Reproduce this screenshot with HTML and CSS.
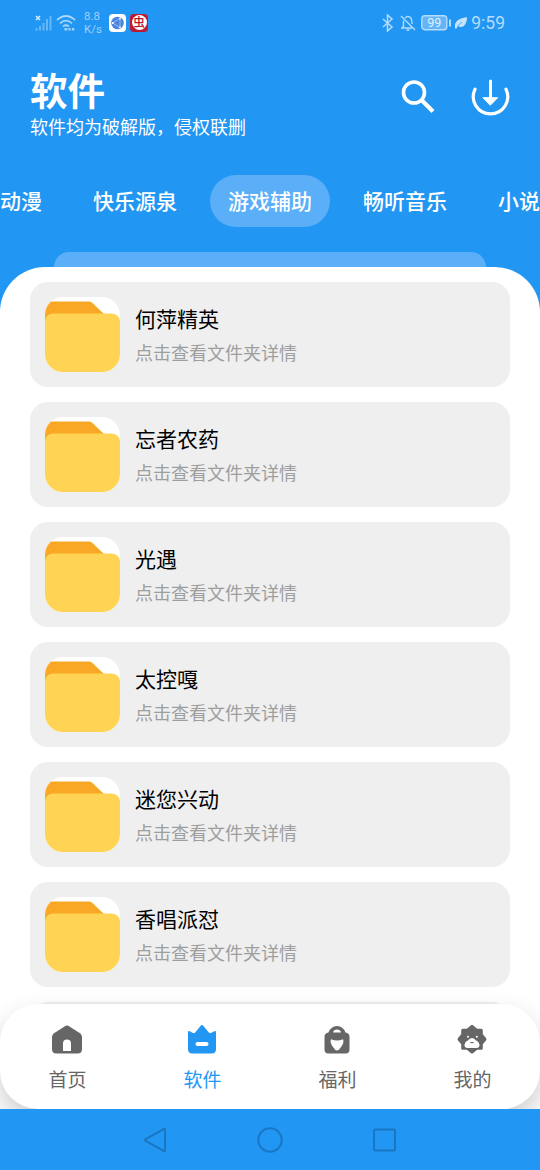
FILE: index.html
```html
<!DOCTYPE html>
<html lang="zh-CN">
<head>
<meta charset="utf-8">
<title>软件</title>
<link rel="stylesheet" href="styles.css">
</head>
<body>
<svg class="defs" width="0" height="0">
  <symbol id="folder" viewBox="0 0 75 75">
    <rect width="75" height="75" fill="#fff"/>
    <path d="M0 4.500H44.500Q46 4.500 47.500 6L60 18V32H0Z" fill="#f9a825"/>
    <path d="M0 75V24Q1 16.500 9 16.500H66Q74 16.500 75 24V75Z" fill="#ffd454"/>
  </symbol>
</svg>
<div class="screen">
  <header class="status">
    <div class="status-left">
      <svg class="signal" width="18" height="18" viewBox="0 0 18 18"><path d="M1 2l4 4M5 2L1 6" stroke="#d3eafd" stroke-width="1.600"/><path d="M1.500 14v2.500M5 12v4.500M8.500 9v7.500M12 5v11.500M15.500 2v14.500" stroke="#67b7f8" stroke-width="2"/></svg>
      <svg class="wifi" width="20" height="18" viewBox="0 0 20 18" fill="none" stroke="#a9d6fb" stroke-width="1.700"><path d="M1 6Q10-2 19 6M4 9.300Q10 4 16 9.300M7 12.500Q10 10 13 12.500"/><path d="M8.500 15.300h2.800M12.500 15.300h2M15.800 15.300h2.500" stroke-width="2.500"/></svg>
      <div class="speed">8.8<br>K/s</div>
      <svg class="app" width="17" height="18" viewBox="0 0 17 18"><rect width="17" height="18" rx="4" fill="#fff"/><circle cx="8.500" cy="9" r="6.300" fill="#4b83df"/><path d="M3.500 9L11 4.500V13.500Z" fill="none" stroke="#a9c7f5" stroke-width=".8"/><circle cx="3.800" cy="9" r="1" fill="#fff"/><circle cx="11" cy="4.500" r=".9" fill="#fff"/><circle cx="11" cy="13.500" r=".9" fill="#fff"/></svg>
      <div class="bug"><span>虫</span></div>
    </div>
    <div class="status-right">
      <svg width="12" height="18" viewBox="0 0 12 18" fill="none" stroke="#b5dcfc" stroke-width="1.500"><path d="M1 5l9 8-4.500 4V1L10 5 1 13"/></svg>
      <svg class="bell" width="16" height="18" viewBox="0 0 16 18" fill="none" stroke="#b5dcfc" stroke-width="1.400"><path d="M5 4Q8 1 11 4 12 6 12 10M3.500 6.500V12L2 14H12M6.500 16h3M1 2l14 14"/></svg>
      <svg class="battery" width="31" height="18" viewBox="0 0 31 18"><rect x=".8" y="1.700" width="25" height="14" rx="3" fill="#63b4f8" stroke="#b5dcfc" stroke-width="1.400"/><path d="M29 5.500v7" stroke="#b5dcfc" stroke-width="2"/><text x="13.300" y="13.200" text-anchor="middle">99</text></svg>
      <svg class="leaf" width="12" height="12" viewBox="0 0 12 12"><path d="M0 11Q-1 6 3 3 6 1 12 0 12 6 9 9 6 11 3 9L1 12Z" fill="#c5e4fd"/><path d="M2.500 9L7 5" stroke="#2196f3" stroke-width=".7"/></svg>
      <span class="time">9:59</span>
    </div>
  </header>

  <div class="heading">
    <div class="heading-text">
      <h1>软件</h1>
      <p>软件均为破解版，侵权联删</p>
    </div>
    <div class="actions">
      <svg width="36" height="36" viewBox="0 0 36 36" fill="none" stroke="#fff"><circle cx="14" cy="13.500" r="10.500" stroke-width="3.600"/><path d="M22 21.500L33 32.500" stroke-width="4.200"/></svg>
      <svg width="40" height="40" viewBox="0 0 40 40" fill="none" stroke="#fff" stroke-linecap="round"><path d="M5 12.200A17.200 17.200 0 1 0 36 12.200" stroke-width="3.200"/><path d="M20.500 4V22" stroke-width="3"/><path d="M13.300 20.700H27.700L20.500 28Z" fill="#fff" stroke-width="1" stroke-linejoin="round"/></svg>
    </div>
  </div>

  <nav class="tabs">
    <span class="tab">动漫</span>
    <span class="tab">快乐源泉</span>
    <span class="tab tab-active">游戏辅助</span>
    <span class="tab">畅听音乐</span>
    <span class="tab">小说</span>
  </nav>

  <div class="backsheet"></div>
  <main class="sheet">
    <article class="card"><svg class="folder"><use href="#folder"/></svg><div><h2>何萍精英</h2><p>点击查看文件夹详情</p></div></article>
    <article class="card"><svg class="folder"><use href="#folder"/></svg><div><h2>忘者农药</h2><p>点击查看文件夹详情</p></div></article>
    <article class="card"><svg class="folder"><use href="#folder"/></svg><div><h2>光遇</h2><p>点击查看文件夹详情</p></div></article>
    <article class="card"><svg class="folder"><use href="#folder"/></svg><div><h2>太控嘎</h2><p>点击查看文件夹详情</p></div></article>
    <article class="card"><svg class="folder"><use href="#folder"/></svg><div><h2>迷您兴动</h2><p>点击查看文件夹详情</p></div></article>
    <article class="card"><svg class="folder"><use href="#folder"/></svg><div><h2>香唱派怼</h2><p>点击查看文件夹详情</p></div></article>
    <article class="card"></article>
    <nav class="bottom">
      <div class="item">
        <svg width="36" height="36" viewBox="0 0 36 36"><path d="M15.500 4.400Q18 2.800 20.500 4.400L31 11.200Q33 12.600 33 15V27Q33 31.500 28.500 31.500H7.500Q3 31.500 3 27V15Q3 12.600 5 11.200Z" fill="#666"/><path d="M14 29V21.500a4 4 0 0 1 8 0V29Z" fill="#fff"/></svg>
        <span>首页</span>
      </div>
      <div class="item item-active">
        <svg width="36" height="36" viewBox="0 0 36 36"><path d="M4 10.500Q4 8.500 5.700 9.300L8.500 10.800Q10.500 12 12 9.500L16.500 4Q18 2.200 19.500 4L24 9.500Q25.500 12 27.500 10.800L30.300 9.300Q32 8.500 32 10.500V27Q32 31.500 27.500 31.500H8.500Q4 31.500 4 27Z" fill="#2196f3"/><path d="M13.500 22h9" stroke="#fff" stroke-width="4" stroke-linecap="round"/></svg>
        <span>软件</span>
      </div>
      <div class="item">
        <svg width="36" height="36" viewBox="0 0 36 36"><path d="M9.500 10.500Q12 4 18 4T26.500 10.500Q30.500 11 30.500 15V27.500Q30.500 31.500 26.500 31.500H9.500Q5.500 31.500 5.500 27.500V15Q5.500 11 9.500 10.500Z" fill="#666"/><path d="M14 10.500Q14.500 7.500 18 7.500T22 10.500Z" fill="#fff"/><path d="M12 17.200Q15 18.500 18 18.500T24 17.200Q25.500 20.500 22 25 20 28.500 18 28.500T14 25Q10.500 20.500 12 17.200Z" fill="#fff"/></svg>
        <span>福利</span>
      </div>
      <div class="item">
        <svg width="36" height="36" viewBox="0 0 36 36"><path d="M18 4.300L22.500 8.200H27.300V12.700L31 17.200 27.300 21.700V26.300H22.500L18 30 13.500 26.300H8.700V21.700L5 17.200 8.700 12.700V8.200H13.500Z" fill="#666" stroke="#666" stroke-width="3" stroke-linejoin="round"/><path d="M10.500 24Q10.500 19.500 14 18.500 15.500 16 18 16T22 18.500Q25.500 19.500 25.500 24 25 26 22.500 26H13.500Q11 26 10.500 24Z" fill="#fff"/><circle cx="14" cy="14.800" r="1" fill="#fff"/><circle cx="22.800" cy="14.800" r="1" fill="#fff"/><path d="M15.800 20H20.200Q18 22.600 15.800 20Z" fill="#666"/></svg>
        <span>我的</span>
      </div>
    </nav>
  </main>

  <footer class="system">
    <svg width="24" height="28" viewBox="0 0 24 28"><path d="M21 3Q22 2.200 22 3.500V24.300Q22 25.600 21 25L2.300 14.700Q1.300 14 2.300 13.300Z"/></svg>
    <svg width="28" height="28" viewBox="0 0 28 28"><circle cx="14" cy="14" r="11.700"/></svg>
    <svg width="24" height="28" viewBox="0 0 24 28"><rect x="1" y="3.500" width="21" height="21" rx="1"/></svg>
  </footer>
</div>
</body>
</html>
```

FILE: styles.css
```css
* { box-sizing: border-box; }

body {
  margin: 0;
  font-family: "Noto Sans CJK SC", sans-serif;
}

h1, h2, p { margin: 0; }
svg { display: block; flex: none; }
.defs { position: absolute; }

.screen {
  width: 540px;
  height: 1170px;
  display: flex;
  flex-direction: column;
  overflow: hidden;
  background: #2196f3;
  color: #fff;
}

.status {
  height: 45px;
  display: flex;
  justify-content: space-between;
  padding: 0 35px;
  flex: none;
}

.status-left, .status-right { display: flex; align-items: center; }
.signal { margin-right: 3px; }
.wifi { margin-right: 8px; }

.speed {
  width: 25px;
  color: #9fd1fb;
  font: 11.5px/13px Roboto, sans-serif;
}

.bug {
  width: 18px;
  height: 18px;
  margin-left: 4px;
  border-radius: 4px;
  background: #bd1933;
  display: grid;
  place-items: center;
}

.bug span {
  width: 15px;
  height: 15px;
  border-radius: 50%;
  background: #fff;
  color: #b8142e;
  font-size: 12px;
  font-weight: 500;
  line-height: 14px;
  text-align: center;
}

.bell { margin-left: 6px; }
.battery { margin-left: 5px; }
.battery text { fill: #e0f1fe; font: 12.5px Roboto, sans-serif; }
.leaf { margin-left: 3px; }

.time {
  margin-left: 4px;
  color: #b5dcfc;
  font: 17.5px/20px Roboto, sans-serif;
}

.heading {
  height: 129px;
  display: flex;
  justify-content: space-between;
  padding: 19px 30px 0;
  flex: none;
}

.heading h1 { font-size: 37.5px; font-weight: 700; line-height: 50px; }
.heading p { font-size: 18px; line-height: 24px; white-space: nowrap; }

.actions {
  height: 66px;
  display: flex;
  align-items: center;
  gap: 34px;
}

.tabs {
  height: 53px;
  display: flex;
  justify-content: center;
  align-items: center;
  gap: 15px;
  flex: none;
}

.tab {
  width: 120px;
  height: 52px;
  border-radius: 26px;
  font-size: 21px;
  font-weight: 500;
  line-height: 51px;
  text-align: center;
  flex: none;
}

.tab:first-child { text-align: right; padding-right: 18px; }
.tab:last-child { text-align: left; padding-left: 18px; }
.tab-active { background: #5aaff8; }

.backsheet {
  height: 15px;
  margin: 25px 54px 0;
  border-radius: 15px 15px 0 0;
  background: #5aaff8;
  flex: none;
}

.sheet {
  position: relative;
  height: 842px;
  padding: 15px 30px 0;
  display: flex;
  flex-direction: column;
  gap: 15px;
  overflow: hidden;
  border-radius: 45px 45px 0 0;
  background: #fff;
  flex: none;
}

.card {
  height: 105px;
  padding: 15px;
  display: flex;
  gap: 15px;
  border-radius: 18px;
  background: #efefef;
  color: #000;
  flex: none;
}

.folder { width: 75px; height: 75px; border-radius: 18px; }
.card h2 { margin-top: 5px; font-size: 21px; font-weight: 400; line-height: 32px; }
.card p { margin-top: 4px; font-size: 18px; line-height: 28px; color: #9e9e9e; }

.bottom {
  position: absolute;
  left: 0;
  right: 0;
  bottom: 0;
  height: 105px;
  display: grid;
  grid-template-columns: repeat(4, 1fr);
  border-radius: 38px;
  background: #fff;
  box-shadow: 0 12px 26px rgba(0, 0, 0, .2);
}

.item {
  padding-top: 18px;
  display: flex;
  flex-direction: column;
  align-items: center;
  color: #666;
  font-size: 19px;
  line-height: 28px;
}

.item svg { margin-left: -1px; }
.item span { margin-top: 7px; }
.item-active { color: #2196f3; }

.system {
  height: 61px;
  display: flex;
  justify-content: center;
  align-items: center;
  gap: 89px;
  flex: none;
}

.system svg { fill: none; stroke: #1976c2; stroke-width: 2; }
```
